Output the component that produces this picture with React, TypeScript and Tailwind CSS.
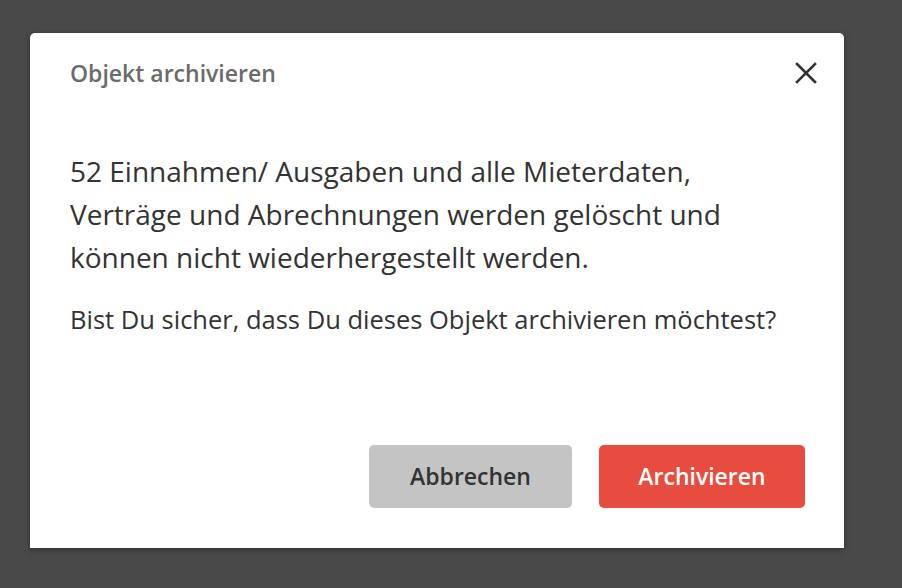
import React from "react";

export default function App() {
  return (
    <div
      className="relative w-[902px] h-[588px] bg-[#494949] overflow-hidden"
      style={{ fontFamily: "'Open Sans', Lato, sans-serif" }}
    >
      <div className="absolute left-[30px] top-[33px] w-[814px] h-[515px] bg-white rounded-t-[5px] shadow-[0_2px_6px_rgba(0,0,0,0.35)] flex flex-col">
        <div className="flex items-center justify-between pl-[40px] pr-[26px] h-[80px]">
          <h2 className="text-[23px] font-semibold text-[#6b6b6b]">Objekt archivieren</h2>
          <button className="w-[24px] h-[24px] flex items-center justify-center text-[#333]">
            <svg width="22" height="22" viewBox="0 0 22 22" fill="none" stroke="currentColor" strokeWidth="2.6" strokeLinecap="square">
              <path d="M2 2 L20 20 M20 2 L2 20" />
            </svg>
          </button>
        </div>
        <div className="pl-[40px] pr-[30px] pt-[37px]">
          <p className="text-[28px] leading-[43px] text-[#333333] whitespace-nowrap">
            52 Einnahmen/ Ausgaben und alle Mieterdaten,
            <br />
            Verträge und Abrechnungen werden gelöscht und
            <br />
            können nicht wiederhergestellt werden.
          </p>
          <p className="mt-[24px] text-[25.5px] leading-[32px] text-[#333333] whitespace-nowrap">
            Bist Du sicher, dass Du dieses Objekt archivieren möchtest?
          </p>
        </div>
        <div className="flex-1" />
        <div className="flex justify-end gap-[27px] pr-[39px] pb-[40px]">
          <button className="w-[203px] h-[63px] rounded-[5px] bg-[#c4c4c4] text-[#333333] text-[23px] font-semibold">
            Abbrechen
          </button>
          <button className="w-[206px] h-[63px] rounded-[5px] bg-[#e74c3e] text-white text-[23px] font-semibold">
            Archivieren
          </button>
        </div>
      </div>
    </div>
  );
}
